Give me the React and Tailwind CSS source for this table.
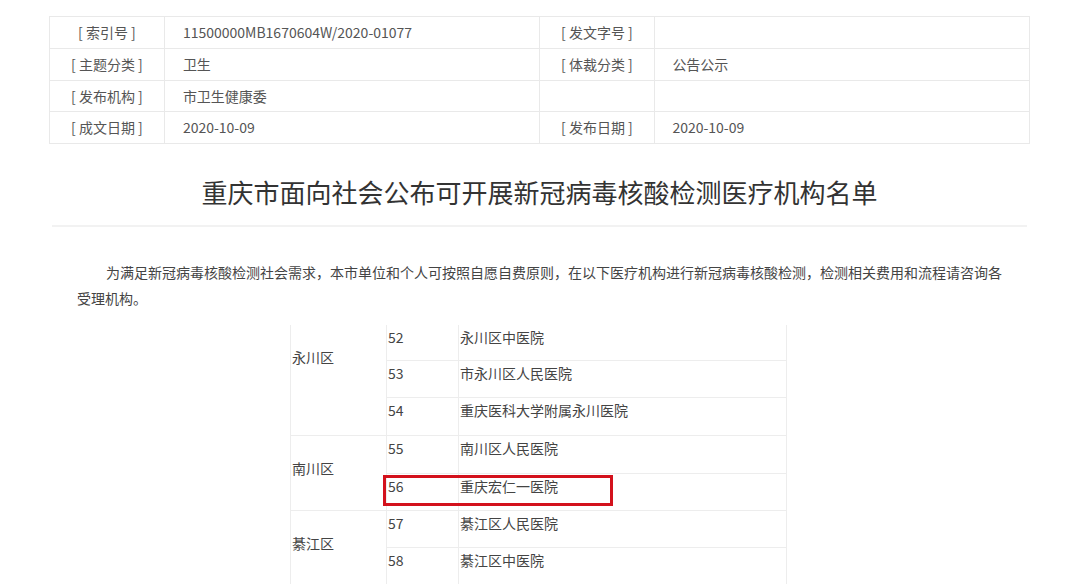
import React from 'react';

const meta = [
  ['[ 索引号 ]', '11500000MB1670604W/2020-01077', '[ 发文字号 ]', '', 'h-[32px]'],
  ['[ 主题分类 ]', '卫生', '[ 体裁分类 ]', '公告公示', 'h-[32px]'],
  ['[ 发布机构 ]', '市卫生健康委', '', '', 'h-[31px]'],
  ['[ 成文日期 ]', '2020-10-09', '[ 发布日期 ]', '2020-10-09', 'h-[32px]'],
];

const groups = [
  {
    name: '永川区',
    rows: [
      ['52', '永川区中医院', 'h-[36px]'],
      ['53', '市永川区人民医院', 'h-[37px]'],
      ['54', '重庆医科大学附属永川医院', 'h-[38px]'],
    ],
  },
  {
    name: '南川区',
    rows: [
      ['55', '南川区人民医院', 'h-[38px]'],
      ['56', '重庆宏仁一医院', 'h-[37px]', true],
    ],
  },
  {
    name: '綦江区',
    rows: [
      ['57', '綦江区人民医院', 'h-[37px]'],
      ['58', '綦江区中医院', 'h-[37px]'],
    ],
  },
];

const App = () => {
  return (
    <div
      className="h-[584px] overflow-hidden bg-white text-[14px] text-[#444]"
      style={{ fontFamily: '"Microsoft YaHei", "Noto Sans CJK SC", "Noto Sans", sans-serif' }}
    >
      <div className="w-[981px] ml-[49px] pt-[16px]">
        {/* Meta table */}
        <div className="border-t border-l border-[#e9e9e9] text-[#555]">
          {meta.map(([l1, v1, l2, v2, h], i) => (
            <div key={i} className={`flex ${h}`}>
              <div className="w-[115px] flex items-center justify-center border-r border-b border-[#e9e9e9]">{l1}</div>
              <div className="w-[375px] flex items-center pl-[18px] border-r border-b border-[#e9e9e9]">{v1}</div>
              <div className="w-[116px] flex items-center justify-center border-r border-b border-[#e9e9e9]">{l2}</div>
              <div className="w-[375px] flex items-center pl-[17px] border-r border-b border-[#e9e9e9]">{v2}</div>
            </div>
          ))}
        </div>

        {/* Title */}
        <h1 className="mt-[30px] text-center text-[26px] leading-[36px] text-[#333]">
          重庆市面向社会公布可开展新冠病毒核酸检测医疗机构名单
        </h1>
        <div className="mt-[15px] mx-[3px] h-[2px] bg-[#f2f2f2]" />

        {/* Intro */}
        <p className="mt-[32px] ml-[28px] w-[930px] indent-[29px] leading-[26px] text-[#444]">
          为满足新冠病毒核酸检测社会需求，本市单位和个人可按照自愿自费原则，在以下医疗机构进行新冠病毒核酸检测，检测相关费用和流程请咨询各受理机构。
        </p>
      </div>

      {/* Hospital list */}
      <div className="ml-[290px] mt-[14px] w-[497px]">
        {groups.map((g) => (
          <div key={g.name} className="flex">
            <div className="w-[96px] pl-[1px] pt-[22px] leading-[20px] border-l border-b border-[#ededed]">{g.name}</div>
            <div className="flex-1">
              {g.rows.map(([no, name, h, marked]) => (
                <div key={no} className={`relative flex ${h} border-b border-[#ededed]`}>
                  <div className="w-[72px] pl-[1px] pt-[2px] leading-[20px] border-l border-[#ededed]">{no}</div>
                  <div className="flex-1 pl-[1px] pt-[2px] leading-[20px] border-l border-r border-[#ededed]">{name}</div>
                  {marked && (
                    <div className="absolute left-[-3px] top-[1px] w-[230px] h-[31px] border-[3px] border-[#d3111c]" />
                  )}
                </div>
              ))}
            </div>
          </div>
        ))}
      </div>
    </div>
  );
};

export default App;
